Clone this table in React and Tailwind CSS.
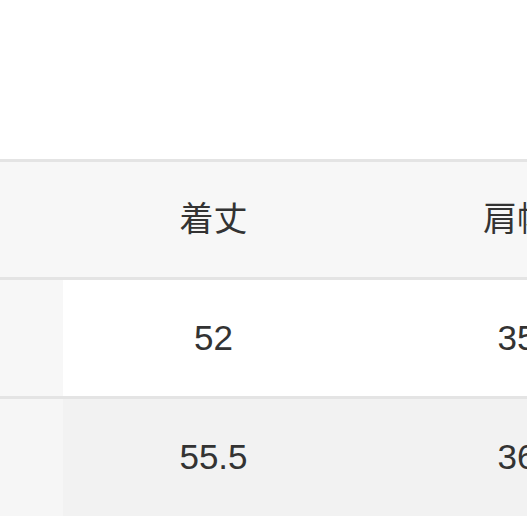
export default function App() {
  const font = { fontFamily: '"Liberation Sans", "Noto Sans CJK JP", Arial, sans-serif' };
  const line = <div className="h-[3px] w-full bg-[#e4e4e4]" />;
  return (
    <div className="w-[527px] h-[527px] overflow-hidden bg-white text-[#333333]" style={font}>
      <div className="h-[159px]" />
      {line}
      <div className="flex h-[115px] w-[670px] bg-[#f7f7f7] text-[34px] items-center">
        <div className="w-[63px] shrink-0" />
        <div className="w-[301px] shrink-0 text-center">着丈</div>
        <div className="w-[306px] shrink-0 text-center">肩幅</div>
      </div>
      {line}
      <div className="flex h-[116px] w-[670px] bg-white text-[35px]">
        <div className="w-[63px] shrink-0 bg-[#f7f7f7]" />
        <div className="w-[301px] shrink-0 flex items-center justify-center">52</div>
        <div className="w-[306px] shrink-0 flex items-center justify-center">35</div>
      </div>
      {line}
      <div className="flex h-[117px] w-[670px] bg-[#f2f2f2] text-[35px]">
        <div className="w-[63px] shrink-0 bg-[#f6f6f6]" />
        <div className="w-[301px] shrink-0 flex items-center justify-center">55.5</div>
        <div className="w-[306px] shrink-0 flex items-center justify-center">36</div>
      </div>
    </div>
  );
}
